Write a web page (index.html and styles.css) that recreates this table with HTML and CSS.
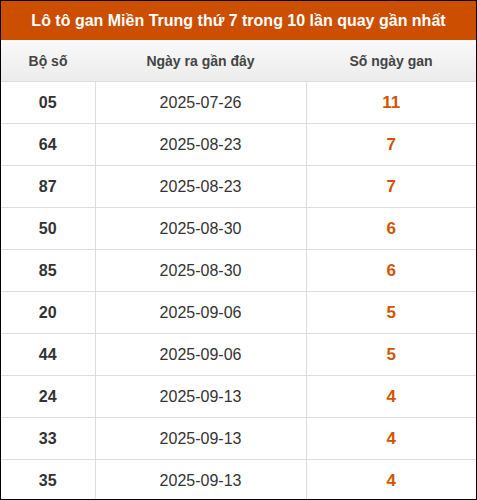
FILE: index.html
```html
<!DOCTYPE html>
<html lang="vi">
<head>
<meta charset="utf-8">
<link rel="stylesheet" href="styles.css">
</head>
<body>
<div class="box">
  <div class="title">Lô tô gan Miền Trung thứ 7 trong 10 lần quay gần nhất</div>
  <table class="gan">
    <colgroup><col class="c1"><col class="c2"><col class="c3"></colgroup>
    <thead>
      <tr><th>Bộ số</th><th>Ngày ra gần đây</th><th>Số ngày gan</th></tr>
    </thead>
    <tbody>
      <tr><td class="num">05</td><td>2025-07-26</td><td class="gan-val">11</td></tr>
      <tr><td class="num">64</td><td>2025-08-23</td><td class="gan-val">7</td></tr>
      <tr><td class="num">87</td><td>2025-08-23</td><td class="gan-val">7</td></tr>
      <tr><td class="num">50</td><td>2025-08-30</td><td class="gan-val">6</td></tr>
      <tr><td class="num">85</td><td>2025-08-30</td><td class="gan-val">6</td></tr>
      <tr><td class="num">20</td><td>2025-09-06</td><td class="gan-val">5</td></tr>
      <tr><td class="num">44</td><td>2025-09-06</td><td class="gan-val">5</td></tr>
      <tr><td class="num">24</td><td>2025-09-13</td><td class="gan-val">4</td></tr>
      <tr><td class="num">33</td><td>2025-09-13</td><td class="gan-val">4</td></tr>
      <tr><td class="num">35</td><td>2025-09-13</td><td class="gan-val">4</td></tr>
    </tbody>
  </table>
</div>
</body>
</html>
```
FILE: styles.css
```css
html, body {
  margin: 0;
  padding: 0;
  background: #fff;
}
.box {
  width: 477px;
  height: 500px;
  box-sizing: border-box;
  border: 1px solid #000;
  overflow: hidden;
  font-family: "Liberation Sans", Arial, sans-serif;
  color: #333;
}
.title {
  height: 39px;
  background: #cc4e00;
  color: #fff;
  font-weight: bold;
  font-size: 16px;
  line-height: 39px;
  text-align: center;
}
.gan {
  width: 475px;
  border-collapse: collapse;
  table-layout: fixed;
}
.c1 { width: 94px; }
.c2 { width: 211px; }
.c3 { width: 170px; }
.gan th {
  height: 41px;
  padding: 0;
  background: linear-gradient(#f9f9f9, #ececec);
  font-size: 14px;
  font-weight: bold;
  color: #444;
  border-bottom: 1px solid #dddddd;
}
.gan td {
  height: 41px;
  padding: 0;
  text-align: center;
  font-size: 16px;
  border-bottom: 1px solid #dddddd;
  border-left: 1px solid #dddddd;
}
.gan td:first-child {
  border-left: none;
}
.gan td.num {
  font-weight: bold;
}
.gan td.gan-val {
  font-weight: bold;
  font-size: 17px;
  color: #d35400;
}
```
